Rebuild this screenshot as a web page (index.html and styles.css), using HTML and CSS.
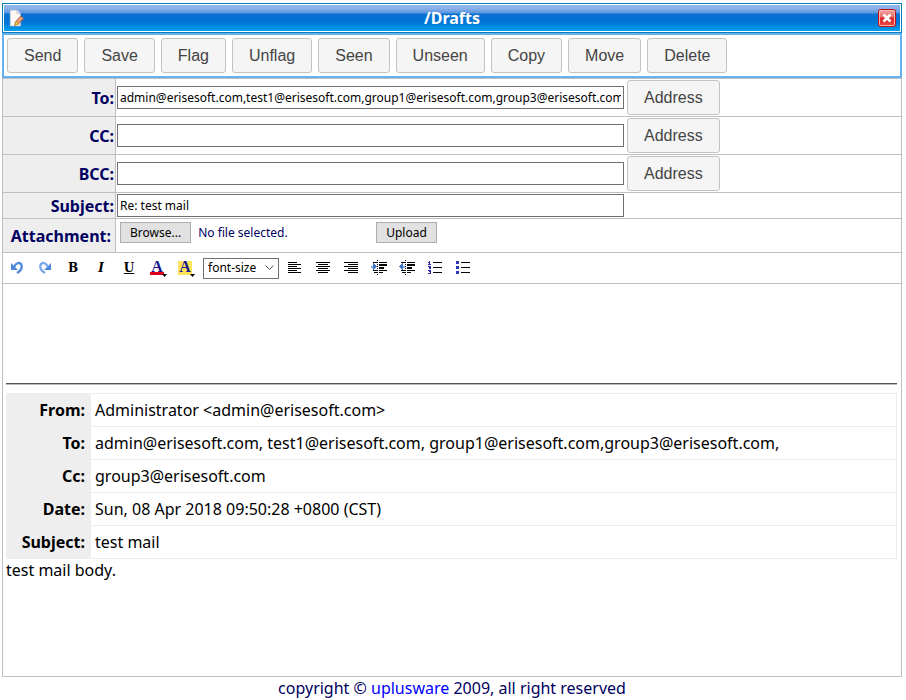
FILE: index.html
```html
<!DOCTYPE html>
<html lang="en">
<head>
<meta charset="utf-8">
<title>/Drafts</title>
<link rel="stylesheet" href="styles.css">
</head>
<body>
<main class="window">
  <header class="titlebar">
    <svg class="title-icon" viewBox="0 0 16 16" aria-hidden="true">
      <path d="M2 1h6l3 3v11H2z" fill="#fdf8f4" stroke="#c9cdd5" stroke-width=".6"/>
      <path d="M8 1v3h3" fill="#e8eaf0" stroke="#b4bac6" stroke-width=".7"/>
      <path d="M7 11l4-4.500 3 2L9.500 13 6 14.500z" fill="#e58d62" stroke="#a95936" stroke-width=".7"/>
      <path d="M7 11l2.500 2.500L6 14.500z" fill="#f5d050" stroke="#b58a1c" stroke-width=".6"/>
      <path d="M8.500 11.500l4-4" stroke="#ffd0b2" stroke-width=".8"/>
    </svg>
    <h1 class="title">/Drafts</h1>
    <button class="close" type="button" aria-label="Close">
      <svg viewBox="0 0 18 18" aria-hidden="true">
        <defs><linearGradient id="red" x1="0" y1="0" x2="0" y2="1"><stop offset="0" stop-color="#f3aaa8"/><stop offset=".45" stop-color="#e56b68"/><stop offset=".5" stop-color="#db2525"/><stop offset="1" stop-color="#e84a48"/></linearGradient></defs>
        <rect x=".5" y=".5" width="17" height="17" rx="2" fill="url(#red)" stroke="#c00d12"/>
        <rect x="1.500" y="1.500" width="15" height="15" rx="1" fill="none" stroke="#f7b5b2"/>
        <path d="M5.500 5.500l7 7m0-7l-7 7" stroke="#fff" stroke-width="2.600"/>
      </svg>
    </button>
  </header>
  <nav class="actions">
    <button class="btn" type="button">Send</button>
    <button class="btn" type="button">Save</button>
    <button class="btn" type="button">Flag</button>
    <button class="btn" type="button">Unflag</button>
    <button class="btn" type="button">Seen</button>
    <button class="btn" type="button">Unseen</button>
    <button class="btn" type="button">Copy</button>
    <button class="btn" type="button">Move</button>
    <button class="btn" type="button">Delete</button>
  </nav>
  <form class="compose">
    <div class="row">
      <label class="name" for="to">To:</label>
      <div class="value"><input class="text" id="to" type="text" value="admin@erisesoft.com,test1@erisesoft.com,group1@erisesoft.com,group3@erisesoft.com"><button class="btn" type="button">Address</button></div>
    </div>
    <div class="row">
      <label class="name" for="cc">CC:</label>
      <div class="value"><input class="text" id="cc" type="text"><button class="btn" type="button">Address</button></div>
    </div>
    <div class="row">
      <label class="name" for="bcc">BCC:</label>
      <div class="value"><input class="text" id="bcc" type="text"><button class="btn" type="button">Address</button></div>
    </div>
    <div class="row">
      <label class="name" for="subject">Subject:</label>
      <div class="value"><input class="text" id="subject" type="text" value="Re: test mail"></div>
    </div>
    <div class="row row-file">
      <label class="name name-file" for="file">Attachment:</label>
      <div class="value value-file">
        <input class="file" id="file" type="file">
        <label class="small-btn" for="file">Browse...</label>
        <span class="file-name">No file selected.</span>
        <button class="small-btn" type="button">Upload</button>
      </div>
    </div>
    <div class="tools">
      <button class="tool" type="button" aria-label="Undo"><svg viewBox="0 0 20 20"><path d="M4 5v7h7z" fill="#4f86dc"/><path d="M7 9c2-4 5-5 7-3 2 3 0 7-4 9" fill="none" stroke="#5289dd" stroke-width="2.400"/></svg></button>
      <button class="tool" type="button" aria-label="Redo"><svg viewBox="0 0 20 20"><path d="M16 5v7H9z" fill="#4f86dc"/><path d="M13 9c-2-4-5-5-7-3-2 3 0 7 4 9" fill="none" stroke="#7ba8e8" stroke-width="2.400"/></svg></button>
      <button class="tool letter bold" type="button" aria-label="Bold">B</button>
      <button class="tool letter italic" type="button" aria-label="Italic">I</button>
      <button class="tool letter under" type="button" aria-label="Underline">U</button>
      <button class="tool letter color" type="button" aria-label="Text color"><span class="glyph">A</span><svg class="drop" viewBox="0 0 5 3"><path d="M0 0h5L2.500 3z"/></svg></button>
      <button class="tool letter mark" type="button" aria-label="Highlight color"><span class="glyph">A</span><svg class="drop" viewBox="0 0 5 3"><path d="M0 0h5L2.500 3z"/></svg></button>
      <select class="size" aria-label="font-size"><option>font-size</option></select>
      <button class="tool" type="button" aria-label="Align left"><svg viewBox="0 0 20 20" shape-rendering="crispEdges"><path d="M3 4.500h9M3 6.500h13M3 8.500h9M3 10.500h13M3 12.500h9M3 14.500h13" stroke="#000"/></svg></button>
      <button class="tool" type="button" aria-label="Align center"><svg viewBox="0 0 20 20" shape-rendering="crispEdges"><path d="M3 4.500h14M5 6.500h10M3 8.500h14M5 10.500h10M3 12.500h14M5 14.500h10" stroke="#000"/></svg></button>
      <button class="tool" type="button" aria-label="Align right"><svg viewBox="0 0 20 20" shape-rendering="crispEdges"><path d="M3 4.500h14M7 6.500h10M3 8.500h14M7 10.500h10M3 12.500h14M7 14.500h10" stroke="#000"/></svg></button>
      <button class="tool" type="button" aria-label="Indent"><svg viewBox="0 0 20 20" shape-rendering="crispEdges"><path d="M4 4.500h4m2 0h8M4 12.500h4m2 0h8M5 14.500h3m2 0h4" stroke="#000"/><path d="M10 7h8M10 10h5" stroke="#000" stroke-width="2"/><path d="M8.500 2v15" stroke="#000" stroke-dasharray="1 1"/><path d="M2 8.500h3" stroke="#82b0ea" stroke-width="2"/><path d="M4 5l4 3.500L4 12z" fill="#4778c8"/></svg></button>
      <button class="tool" type="button" aria-label="Outdent"><svg viewBox="0 0 20 20" shape-rendering="crispEdges"><path d="M4 4.500h4m2 0h8M4 12.500h4m2 0h8M5 14.500h3m2 0h4" stroke="#000"/><path d="M10 7h8M10 10h5" stroke="#000" stroke-width="2"/><path d="M8.500 2v15" stroke="#000" stroke-dasharray="1 1"/><path d="M5 8.500h3" stroke="#82b0ea" stroke-width="2"/><path d="M6 5L2 8.500 6 12z" fill="#4778c8"/></svg></button>
      <button class="tool" type="button" aria-label="Numbered list"><svg viewBox="0 0 20 20" shape-rendering="crispEdges"><path d="M8 4.500h9M8 9.500h9M8 14.500h9" stroke="#000"/><path d="M3 4.500h1M4.500 3v4M3 6.500h3M3 8.500h2v1H4v1h2M3 12.500h2v1H4m1 0v2H3" fill="none" stroke="#2525a8"/></svg></button>
      <button class="tool" type="button" aria-label="Bulleted list"><svg viewBox="0 0 20 20" shape-rendering="crispEdges"><path d="M8 4.500h9M8 9.500h9M8 14.500h9" stroke="#000"/><path d="M3 3h3v3H3zM3 8h3v3H3zM3 13h3v3H3z" fill="#2a37b4"/></svg></button>
    </div>
    <div class="editor" contenteditable="true" role="textbox" aria-label="Message body">
      <hr class="rule">
      <table class="quoted">
        <tr><th scope="row">From:</th><td>Administrator &lt;admin@erisesoft.com&gt;</td></tr>
        <tr><th scope="row">To:</th><td>admin@erisesoft.com, test1@erisesoft.com, group1@erisesoft.com,group3@erisesoft.com,</td></tr>
        <tr><th scope="row">Cc:</th><td>group3@erisesoft.com</td></tr>
        <tr><th scope="row">Date:</th><td>Sun, 08 Apr 2018 09:50:28 +0800 (CST)</td></tr>
        <tr><th scope="row">Subject:</th><td>test mail</td></tr>
      </table>
      <p class="body-text">test mail body.</p>
    </div>
  </form>
</main>
<footer class="footer">copyright © <a href="#">uplusware</a> 2009, all right reserved</footer>
</body>
</html>
```
FILE: styles.css
```css
* { box-sizing: border-box; }

body {
  margin: 0;
  padding: 3px 4px 0 2px;
  background: #fff;
  color: #000060;
  font: 16px/22px "Noto Sans", "Open Sans", sans-serif;
}

button, input, select { margin: 0; font: inherit; }
button { cursor: pointer; }

.titlebar {
  display: flex;
  align-items: center;
  height: 30px;
  padding: 0 5px 0 5px;
  border: 1px solid #087fb8;
  background: linear-gradient(#8fb4ea 0, #8fb4ea 4px, #5796e0 9px, #0a70d0 10px, #0074d4 18px, #00a0ec 27px);
  box-shadow: inset 0 0 0 1px #fff;
}

.title-icon { width: 18px; height: 18px; }
.title { flex: 1; margin: 0; color: #fff; font-size: 16px; line-height: 20px; text-align: center; }
.close { width: 18px; height: 18px; padding: 0; border: 0; background: none; }
.close svg { display: block; }

.actions {
  display: flex;
  flex-wrap: wrap;
  gap: 6px;
  padding: 3px;
  border: 2px solid #68b0f4;
}

.btn {
  height: 35px;
  padding: 0 16px;
  border: 1px solid #c3c3c3;
  border-radius: 3px;
  background: #f5f5f5;
  color: #444;
  font: 16px/20px "Liberation Sans", sans-serif;
}

.compose { border: 1px solid #bfbfbf; }

.row {
  display: grid;
  grid-template-columns: 113px 1fr;
  border-bottom: 1px solid #bfbfbf;
}

.name {
  display: flex;
  align-items: center;
  justify-content: flex-end;
  padding-right: 1px;
  border-right: 1px solid #bfbfbf;
  background: #eee;
  font-weight: 700;
}
.name-file { padding-right: 4px; }

.value { display: flex; align-items: center; gap: 3px; padding: 1px; }

.text {
  width: 507px;
  height: 23px;
  padding: 0 2px;
  border: 1px solid #707070;
  background: #fff;
  color: #000;
  font: 12px/16px "Noto Sans", sans-serif;
}

.row-file { min-height: 34px; }
.value-file { position: relative; align-items: flex-start; padding: 3px 4px; font-size: 12px; }
.file { position: absolute; width: 1px; height: 1px; opacity: 0; }
.small-btn {
  height: 21px;
  padding: 0 9px;
  border: 1px solid #adadad;
  background: #e1e1e1;
  color: #000;
  font: 12px/19px "Noto Sans", sans-serif;
}
.file-name { width: 179px; padding-left: 4px; }

.tools {
  display: flex;
  align-items: center;
  height: 31px;
  border-bottom: 1px solid #bfbfbf;
}
.tool {
  position: relative;
  display: flex;
  align-items: center;
  justify-content: center;
  width: 28px;
  height: 28px;
  padding: 0;
  border: 0;
  background: none;
}
.tool svg { width: 20px; height: 20px; }
.letter { color: #000; font: 700 12px/14px "DejaVu Serif", "Liberation Serif", serif; }
.italic { font-style: italic; }
.under { text-decoration: underline; }
.glyph { width: 14px; height: 14px; color: #16168c; font: 700 16px/12px "Liberation Serif", serif; }
.color .glyph { border-bottom: 3px solid #e00018; }
.mark .glyph { background: #ffe45c; }
.tool .drop { position: absolute; right: 4px; bottom: 5px; width: 5px; height: 3px; }

.size {
  width: 76px;
  height: 21px;
  margin: 0 2px 0 4px;
  padding: 0 4px;
  border: 1px solid #707070;
  appearance: none;
  background: #fff url("data:image/svg+xml,%3Csvg xmlns='http://www.w3.org/2000/svg' width='9' height='6'%3E%3Cpath d='M.5 .5l4 4 4-4' fill='none' stroke='%23555'/%3E%3C/svg%3E") no-repeat right 4px center;
  color: #000;
  font: 12px/18px "Noto Sans", sans-serif;
}

.editor { min-height: 392px; padding: 99px 4px 8px 3px; color: #000; outline: none; }
.rule { height: 2px; margin: 0 0 8px; border: 0; border-top: 1px solid #555; border-bottom: 1px solid #bbb; }
.quoted { width: 100%; border-collapse: collapse; font-size: 16px; }
.quoted th, .quoted td { height: 33px; padding: 0 4px; border: 1px solid #eee; }
.quoted th { width: 84px; padding-right: 5px; background: #eee; text-align: right; }
.body-text { margin: 0; }

.footer { text-align: center; }
.footer a { color: #00f; text-decoration: none; }
```
